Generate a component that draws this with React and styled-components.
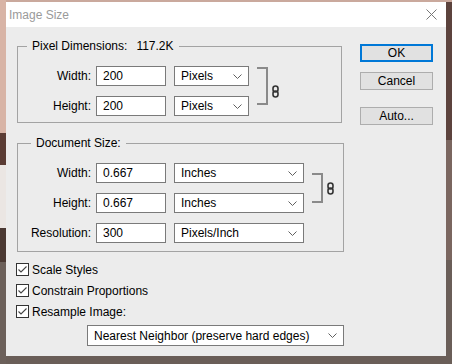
import React from 'react';
import styled, { createGlobalStyle } from 'styled-components';

const GlobalStyle = createGlobalStyle`
  html, body {
    margin: 0;
    padding: 0;
  }
  body {
    width: 452px;
    height: 364px;
    overflow: hidden;
    font-family: "Liberation Sans", Arial, sans-serif;
    background:
      linear-gradient(to bottom, #d8b4a6 0 133px, #5b3c34 133px 165px, #ebe6e3 165px 228px, #4a3832 228px 262px, #6c605a 262px) left top / 6px 100% no-repeat,
      linear-gradient(to bottom, #caa99d 0 2px, #5c433d 2px 140px, #7a665f 140px 260px, #6a5e58 260px);
  }
`;

const Screen = styled.div`
  padding: 2px 6px 0;
`;

const Window = styled.div`
  width: 440px;
  height: 354px;
  background: #ececec;
  display: flex;
  flex-direction: column;
`;

const TitleBar = styled.div`
  height: 25px;
  flex: none;
  background: #fff;
  display: flex;
  align-items: center;
  justify-content: space-between;
  padding: 0 9px 0 3px;
  font-size: 12px;
  color: #9a9a9a;
`;

const Body = styled.div`
  display: flex;
  padding: 0 0 0 10px;
`;

const Main = styled.div`
  width: 328px;
  display: flex;
  flex-direction: column;
`;

const Group = styled.fieldset`
  margin: ${p => p.$top}px 0 0 1px;
  width: ${p => p.$width}px;
  box-sizing: border-box;
  border: 1px solid #a3a3a3;
  padding: 13px 0 ${p => p.$bottom}px 0;
  min-width: 0;
`;

const Legend = styled.legend`
  margin-left: ${p => p.$indent}px;
  padding: 0 5px;
  font-size: 12px;
  line-height: 14px;
  color: #000;
`;

const Extra = styled.span`
  margin-left: 9px;
`;

const Fields = styled.div`
  display: grid;
  grid-template-columns: 78px 78px ${p => p.$select}px 1fr;
  grid-auto-rows: 20px;
  row-gap: 10px;
`;

const Label = styled.label`
  font-size: 12px;
  color: #000;
  text-align: right;
  padding-right: 5px;
  align-self: center;
`;

const Input = styled.div`
  width: 70px;
  height: 20px;
  box-sizing: border-box;
  border: 1px solid #7a7a7a;
  background: #fff;
  font-size: 12px;
  line-height: 18px;
  padding-left: 6px;
  color: #000;
`;

const Select = styled.div`
  width: ${p => p.$width}px;
  height: ${p => p.$height || 20}px;
  box-sizing: border-box;
  border: 1px solid #7a7a7a;
  background: #fff;
  font-size: 12px;
  display: flex;
  align-items: center;
  justify-content: space-between;
  padding: 0 6px 0 6px;
  color: #000;
`;

const LinkCell = styled.div`
  grid-column: 4;
  grid-row: 1 / span 2;
  display: flex;
  align-items: center;
  padding-left: 8px;
`;

const Bracket = styled.div`
  width: 9px;
  align-self: stretch;
  margin: ${p => p.$inset[0]}px 0 ${p => p.$inset[1]}px;
  border: 2px solid #8a8a8a;
  border-left: none;
`;

const Chain = styled.svg`
  margin-left: 4px;
  flex: none;
`;

const Options = styled.div`
  display: flex;
  flex-direction: column;
  margin-top: 7px;
`;

const CheckRow = styled.div`
  height: 21px;
  display: flex;
  align-items: center;
  gap: 3px;
  font-size: 12px;
  color: #000;
`;

const Box = styled.span`
  width: 13px;
  height: 13px;
  box-sizing: border-box;
  border: 1px solid #333;
  background: #fff;
  display: flex;
  align-items: center;
  justify-content: center;
`;

const Method = styled.div`
  margin: 3px 0 0 71px;
`;

const Side = styled.div`
  display: flex;
  flex-direction: column;
  margin-left: 16px;
  padding-top: 17px;
`;

const Button = styled.div`
  width: 73px;
  height: 18px;
  box-sizing: border-box;
  margin-top: ${p => p.$gap || 0}px;
  background: #e1e1e1;
  border: ${p => (p.$primary ? '2px solid #0078d7' : '1px solid #adadad')};
  font-size: 12px;
  color: #000;
  display: flex;
  align-items: center;
  justify-content: center;
`;

const Chevron = () => (
  <svg width="9" height="5" viewBox="0 0 9 5">
    <path d="M0.5 0.5 L4.5 4.5 L8.5 0.5" fill="none" stroke="#606060" strokeWidth="1" />
  </svg>
);

const ChainIcon = () => (
  <Chain width="7" height="13" viewBox="0 0 7 13">
    <rect x="1" y="1" width="5" height="6" rx="2.5" fill="none" stroke="#333" strokeWidth="1.6" />
    <rect x="1" y="6" width="5" height="6" rx="2.5" fill="none" stroke="#333" strokeWidth="1.6" />
  </Chain>
);

const Check = ({ label }) => (
  <CheckRow>
    <Box>
      <svg width="11" height="11" viewBox="0 0 11 11">
        <path d="M1.5 5.5 L4 8 L9.5 2.5" fill="none" stroke="#444" strokeWidth="1.1" />
      </svg>
    </Box>
    {label}
  </CheckRow>
);

const FieldRows = ({ rows, selectWidth, inset }) => (
  <Fields $select={selectWidth}>
    {rows.map((r, i) => (
      <React.Fragment key={r.label}>
        <Label style={{ gridRow: i + 1 }}>{r.label}</Label>
        <Input style={{ gridRow: i + 1 }}>{r.value}</Input>
        <Select style={{ gridRow: i + 1 }} $width={selectWidth}>
          {r.unit}
          <Chevron />
        </Select>
      </React.Fragment>
    ))}
    <LinkCell>
      <Bracket $inset={inset} />
      <ChainIcon />
    </LinkCell>
  </Fields>
);

export default function App() {
  return (
    <>
      <GlobalStyle />
      <Screen>
        <Window>
          <TitleBar>
            <span>Image Size</span>
            <svg width="11" height="11" viewBox="0 0 11 11">
              <path d="M0.5 0.5 L10.5 10.5 M10.5 0.5 L0.5 10.5" stroke="#777" strokeWidth="1" />
            </svg>
          </TitleBar>
          <Body>
            <Main>
              <Group $top={12} $width={325} $bottom={6}>
                <Legend $indent={9}>
                  Pixel Dimensions:<Extra>117.2K</Extra>
                </Legend>
                <FieldRows
                  selectWidth={75}
                  inset={[1, 11]}
                  rows={[
                    { label: 'Width:', value: '200', unit: 'Pixels' },
                    { label: 'Height:', value: '200', unit: 'Pixels' },
                  ]}
                />
              </Group>
              <Group $top={13} $width={327} $bottom={8}>
                <Legend $indent={13}>Document Size:</Legend>
                <FieldRows
                  selectWidth={130}
                  inset={[10, 10]}
                  rows={[
                    { label: 'Width:', value: '0.667', unit: 'Inches' },
                    { label: 'Height:', value: '0.667', unit: 'Inches' },
                    { label: 'Resolution:', value: '300', unit: 'Pixels/Inch' },
                  ]}
                />
              </Group>
              <Options>
                <Check label="Scale Styles" />
                <Check label="Constrain Proportions" />
                <Check label="Resample Image:" />
              </Options>
              <Method>
                <Select $width={257} $height={21}>
                  Nearest Neighbor (preserve hard edges)
                  <Chevron />
                </Select>
              </Method>
            </Main>
            <Side>
              <Button $primary>OK</Button>
              <Button $gap={10}>Cancel</Button>
              <Button $gap={17}>Auto...</Button>
            </Side>
          </Body>
        </Window>
      </Screen>
    </>
  );
}
